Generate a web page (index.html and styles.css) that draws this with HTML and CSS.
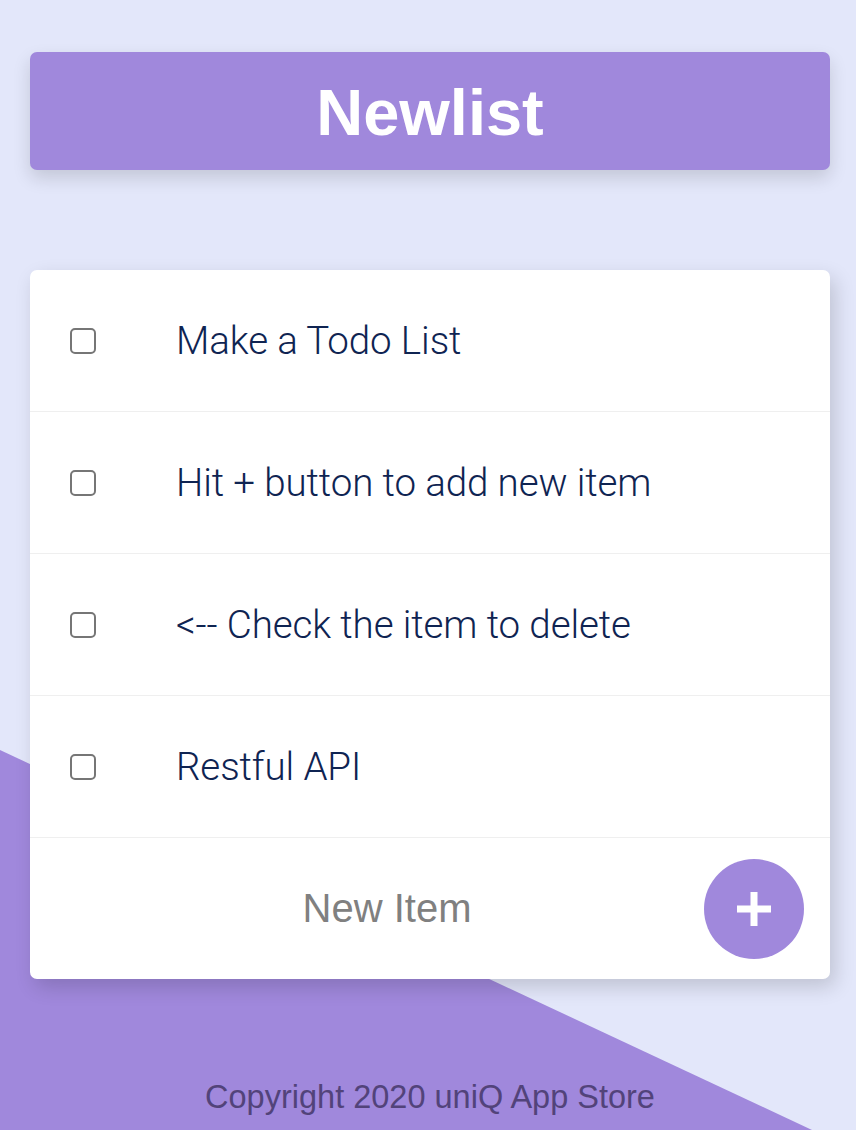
FILE: index.html
```html
<!DOCTYPE html>
<html>
<head>
<meta charset="utf-8">
<title>Newlist</title>
<link rel="stylesheet" href="styles.css">
</head>
<body>
<div class="bg-shape"></div>
<main class="page">
  <header class="title-bar"><h1>Newlist</h1></header>
  <section class="card">
    <div class="item"><span class="check"></span><p>Make a Todo List</p></div>
    <div class="item"><span class="check"></span><p>Hit + button to add new item</p></div>
    <div class="item"><span class="check"></span><p>&lt;-- Check the item to delete</p></div>
    <div class="item"><span class="check"></span><p>Restful API</p></div>
    <form class="new-row">
      <input class="new-input" type="text" placeholder="New Item">
      <button class="add-btn" type="button" aria-label="Add">
        <svg width="34" height="34" viewBox="0 0 34 34"><rect x="0" y="13.5" width="34" height="7" fill="#fff"/><rect x="13.5" y="0" width="7" height="34" fill="#fff"/></svg>
      </button>
    </form>
  </section>
  <footer class="footer">Copyright 2020 uniQ App Store</footer>
</main>
</body>
</html>
```

FILE: styles.css
```css
html, body {
  margin: 0;
  padding: 0;
}
body {
  background: #e3e7fa;
  width: 856px;
  height: 1130px;
  overflow: hidden;
  position: relative;
  font-family: "Liberation Sans", Arial, sans-serif;
}
.bg-shape {
  position: absolute;
  left: 0;
  top: 0;
  width: 856px;
  height: 1130px;
  background: #a088dc;
  clip-path: polygon(0 750px, 812px 1130px, 0 1130px);
}
.page {
  position: relative;
  padding: 52px 26px 0 30px;
  display: flex;
  flex-direction: column;
}
.title-bar {
  background: #a088dc;
  border-radius: 7px;
  height: 118px;
  display: flex;
  align-items: center;
  justify-content: center;
  box-shadow: 0 8px 18px rgba(0, 0, 0, 0.14);
}
.title-bar h1 {
  margin: 0;
  color: #fff;
  font-size: 65px;
  font-weight: bold;
  font-family: "Liberation Sans", Arial, sans-serif;
  line-height: 1;
  transform: translateY(1px);
}
.card {
  margin-top: 100px;
  background: #fff;
  border-radius: 7px;
  box-shadow: 5px 8px 20px rgba(0, 0, 0, 0.16);
  display: flex;
  flex-direction: column;
}
.item {
  height: 141px;
  border-bottom: 1px solid #efefef;
  display: flex;
  align-items: center;
  padding-left: 40px;
}
.check {
  width: 22px;
  height: 22px;
  border: 2px solid #767676;
  border-radius: 5px;
  flex: none;
}
.item p {
  margin: 0 0 0 80px;
  font-family: Roboto, "Liberation Sans", sans-serif;
  font-weight: 300;
  font-size: 38.5px;
  color: #0f2452;
  letter-spacing: -0.1px;
}
.new-row {
  height: 141px;
  margin: 0;
  display: flex;
  align-items: center;
  padding-right: 26px;
}
.new-input {
  flex: 1;
  min-width: 0;
  border: none;
  outline: none;
  background: transparent;
  padding: 0 0 0 40px;
  text-align: center;
  font-family: "Liberation Sans", Arial, sans-serif;
  font-size: 40px;
  color: #808080;
}
.new-input::placeholder {
  color: #808080;
  opacity: 1;
}
.add-btn {
  width: 100px;
  height: 100px;
  border-radius: 50%;
  border: none;
  background: #a088dc;
  display: flex;
  align-items: center;
  justify-content: center;
  padding: 0;
  flex: none;
}
.footer {
  margin-top: 100px;
  text-align: center;
  font-size: 32.5px;
  color: #52437a;
}
```
